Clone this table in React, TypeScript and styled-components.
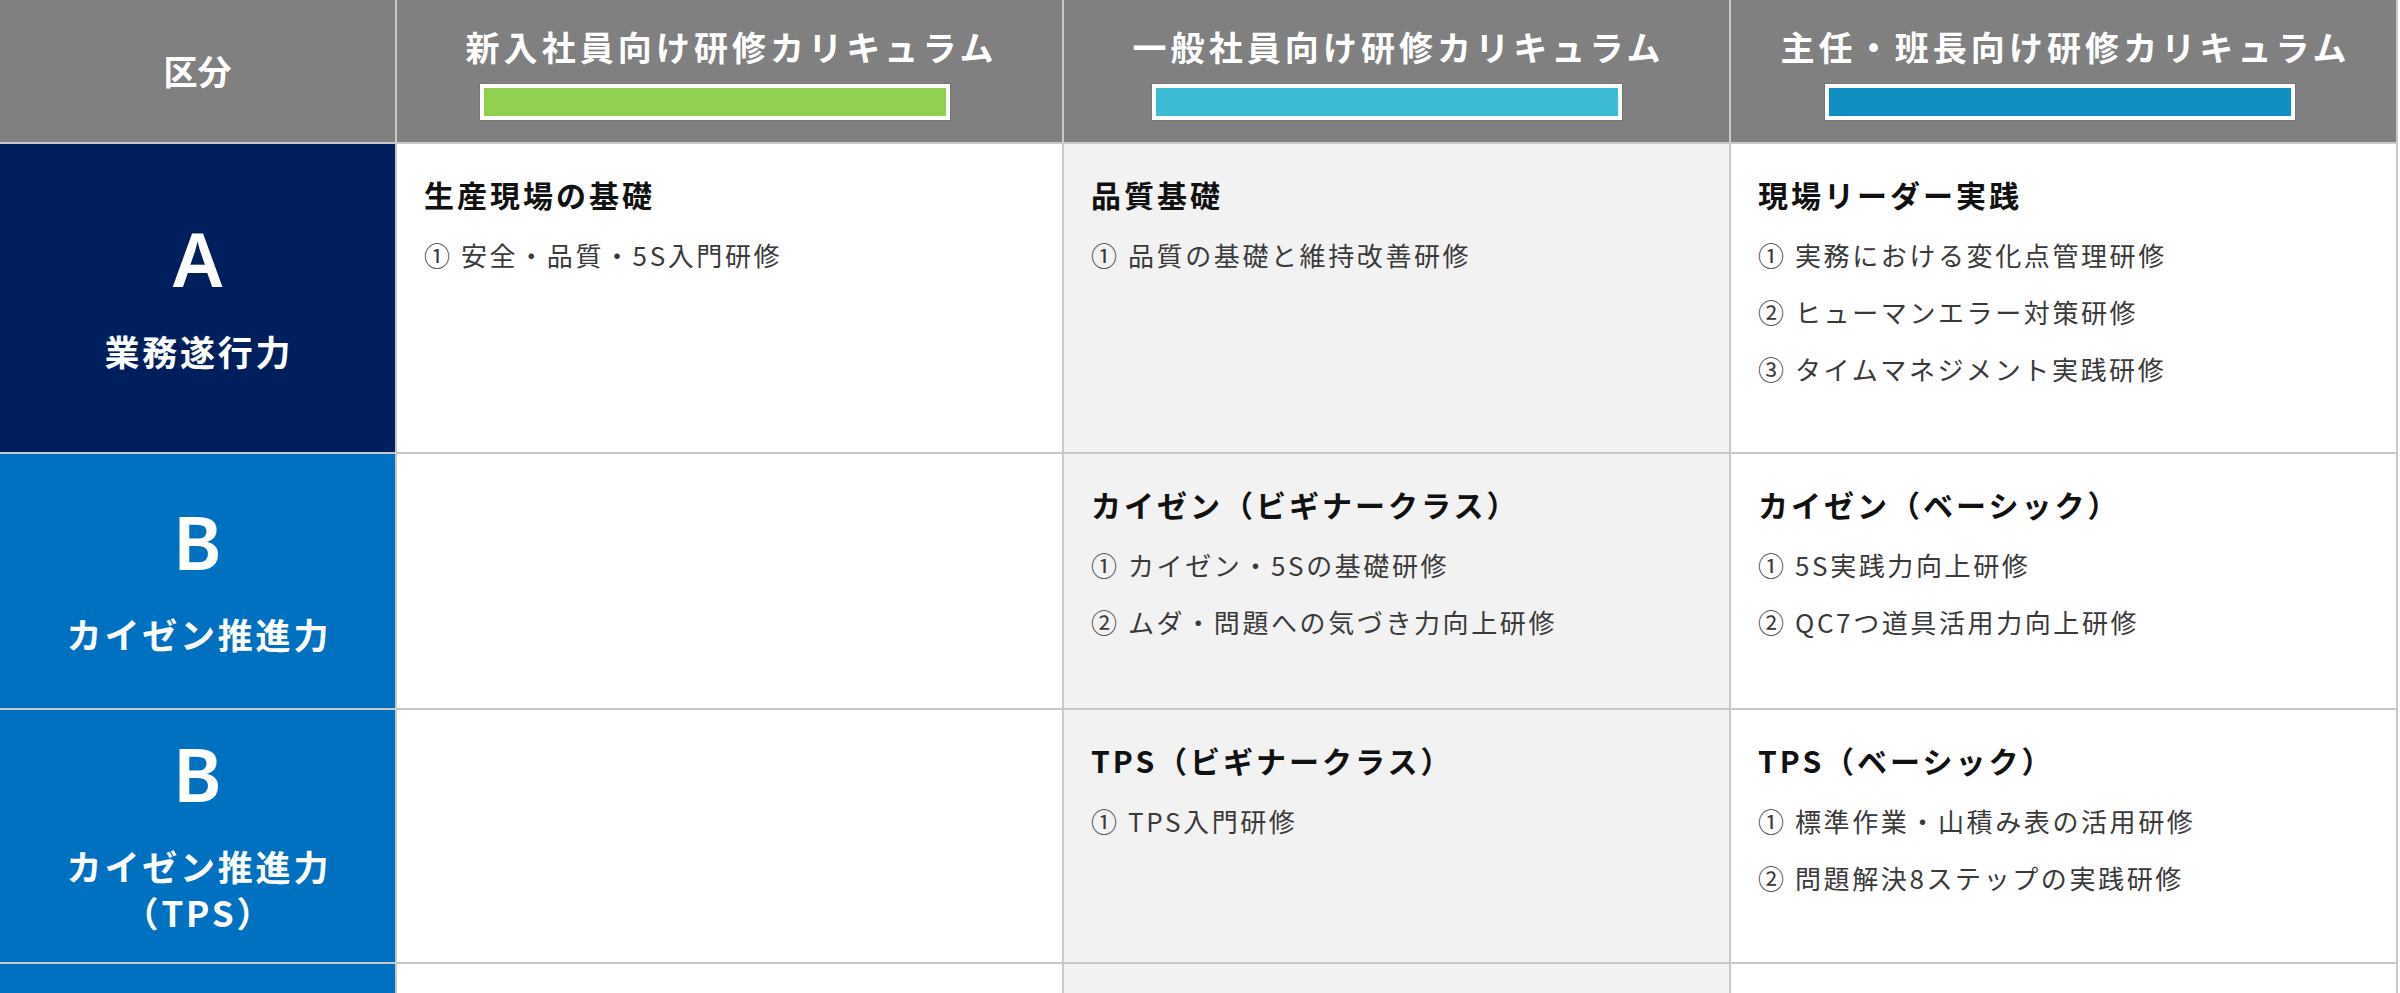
import styled, { createGlobalStyle } from "styled-components";

const GlobalStyle = createGlobalStyle`
  html, body {
    margin: 0;
    padding: 0;
    background: #fff;
    overflow: hidden;
  }
  body {
    font-family: "Noto Sans CJK JP", "Noto Sans", sans-serif;
  }
`;

const Grid = styled.div`
  display: grid;
  box-sizing: border-box;
  width: 2398px;
  padding-right: 2px;
  grid-template-columns: 395px repeat(3, 665px);
  grid-template-rows: 142px 308px 254px 252px 260px;
  gap: 2px;
  background: #c8c8c8;
`;

const HeadCell = styled.div<{ $center?: boolean }>`
  background: #808080;
  color: #fff;
  display: flex;
  flex-direction: column;
  align-items: center;
  justify-content: ${(p) => (p.$center ? "center" : "flex-start")};
  padding-top: ${(p) => (p.$center ? "0" : "24px")};
`;

const HeadLabel = styled.div`
  font-size: 34px;
  font-weight: 700;
  line-height: 46px;
`;

const HeadTitle = styled.div`
  font-size: 34px;
  font-weight: 700;
  line-height: 46px;
  letter-spacing: 0.12em;
  padding-left: 0.12em;
`;

// bars sit a little left of the column centre in the original
const Bar = styled.div<{ $color: string; $shift: number }>`
  box-sizing: border-box;
  width: 470px;
  height: 36px;
  margin-top: 14px;
  margin-right: ${(p) => p.$shift * 2}px;
  border: 4px solid #fff;
  background: ${(p) => p.$color};
  box-shadow: 0 0 0 1px rgba(0, 0, 0, 0.08);
`;

const LabelCell = styled.div<{ $bg: string }>`
  background: ${(p) => p.$bg};
  color: #fff;
  display: flex;
  flex-direction: column;
  align-items: center;
  justify-content: center;
  text-align: center;
`;

const Letter = styled.div`
  font-family: "Noto Sans", "Noto Sans CJK JP", sans-serif;
  font-size: 74px;
  font-weight: 600;
  line-height: 72px;
`;

const LabelText = styled.div`
  margin-top: 33px;
  font-size: 35px;
  font-weight: 700;
  line-height: 46px;
  letter-spacing: 0.08em;
  padding-left: 0.08em;
`;

const Cell = styled.div<{ $shade?: boolean }>`
  background: ${(p) => (p.$shade ? "#f2f2f2" : "#fff")};
  padding: 28px 27px 0;
`;

const CourseTitle = styled.div`
  font-size: 30px;
  font-weight: 700;
  line-height: 44px;
  letter-spacing: 0.1em;
  color: #111;
  margin-bottom: 10px;
`;

const Item = styled.div`
  font-size: 26px;
  line-height: 57px;
  letter-spacing: 0.1em;
  color: #3a3a3a;
`;

interface ICourse {
  title: string;
  items: string[];
}

interface IRow {
  letter: string;
  label: string[];
  bg: string;
  cells: (ICourse | null)[];
}

const columns = [
  { title: "新入社員向け研修カリキュラム", color: "#92d050", shift: 15 },
  { title: "一般社員向け研修カリキュラム", color: "#3dbbd3", shift: 10 },
  { title: "主任・班長向け研修カリキュラム", color: "#118fc0", shift: 4 },
];

const rows: IRow[] = [
  {
    letter: "A",
    label: ["業務遂行力"],
    bg: "#001f5c",
    cells: [
      { title: "生産現場の基礎", items: ["① 安全・品質・5S入門研修"] },
      { title: "品質基礎", items: ["① 品質の基礎と維持改善研修"] },
      {
        title: "現場リーダー実践",
        items: [
          "① 実務における変化点管理研修",
          "② ヒューマンエラー対策研修",
          "③ タイムマネジメント実践研修",
        ],
      },
    ],
  },
  {
    letter: "B",
    label: ["カイゼン推進力"],
    bg: "#0070c0",
    cells: [
      null,
      {
        title: "カイゼン（ビギナークラス）",
        items: ["① カイゼン・5Sの基礎研修", "② ムダ・問題への気づき力向上研修"],
      },
      {
        title: "カイゼン（ベーシック）",
        items: ["① 5S実践力向上研修", "② QC7つ道具活用力向上研修"],
      },
    ],
  },
  {
    letter: "B",
    label: ["カイゼン推進力", "（TPS）"],
    bg: "#0070c0",
    cells: [
      null,
      { title: "TPS（ビギナークラス）", items: ["① TPS入門研修"] },
      {
        title: "TPS（ベーシック）",
        items: ["① 標準作業・山積み表の活用研修", "② 問題解決8ステップの実践研修"],
      },
    ],
  },
  {
    letter: "",
    label: [],
    bg: "#0070c0",
    cells: [null, null, null],
  },
];

function App() {
  return (
    <>
      <GlobalStyle />
      <Grid>
        <HeadCell $center>
          <HeadLabel>区分</HeadLabel>
        </HeadCell>
        {columns.map((col) => (
          <HeadCell key={col.title}>
            <HeadTitle>{col.title}</HeadTitle>
            <Bar $color={col.color} $shift={col.shift} />
          </HeadCell>
        ))}
        {rows.map((row, r) => (
          <>
            <LabelCell key={`l${r}`} $bg={row.bg}>
              {row.letter && <Letter>{row.letter}</Letter>}
              {row.label.length > 0 && (
                <LabelText>
                  {row.label.map((line) => (
                    <div key={line}>{line}</div>
                  ))}
                </LabelText>
              )}
            </LabelCell>
            {row.cells.map((course, c) => (
              <Cell key={`c${r}-${c}`} $shade={c === 1}>
                {course && (
                  <>
                    <CourseTitle>{course.title}</CourseTitle>
                    {course.items.map((item) => (
                      <Item key={item}>{item}</Item>
                    ))}
                  </>
                )}
              </Cell>
            ))}
          </>
        ))}
      </Grid>
    </>
  );
}

export default App;
